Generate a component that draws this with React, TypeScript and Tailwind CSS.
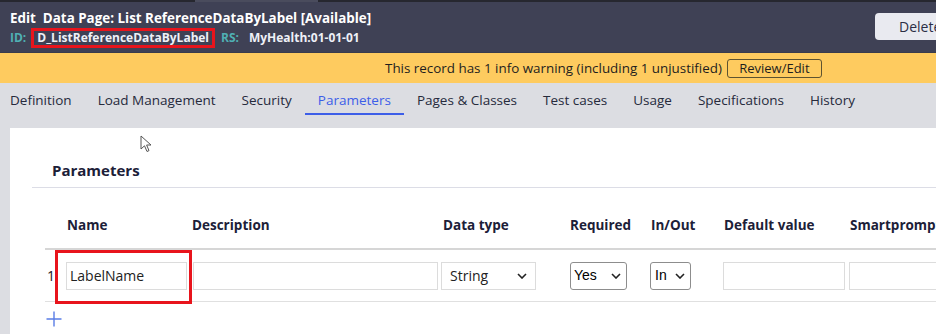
const tabs = [
  "Definition",
  "Load Management",
  "Security",
  "Parameters",
  "Pages & Classes",
  "Test cases",
  "Usage",
  "Specifications",
  "History",
];

function Chevron() {
  return (
    <svg width="10" height="6" viewBox="0 0 10 6" className="shrink-0">
      <path d="M1 1 L5 5 L9 1" fill="none" stroke="#222" strokeWidth="1.6" />
    </svg>
  );
}

export default function App() {
  return (
    <div className="relative w-[936px] h-[334px] overflow-hidden bg-[#dcdde2] font-['Open_Sans',sans-serif] flex flex-col">
      {/* top strip */}
      <div className="h-[2px] bg-[#26272f] flex shrink-0">
        <div className="w-[195px]" />
        <div className="w-[123px] bg-[#4a4c5d]" />
      </div>

      {/* header */}
      <div className="h-[50px] bg-[#3f4155] flex shrink-0">
        <div className="pl-[10px] pt-[6px]">
          <div className="text-[13.4px] leading-[20px] font-bold text-white whitespace-nowrap">
            Edit&nbsp; Data Page: List ReferenceDataByLabel [Available]
          </div>
          <div className="flex items-center text-[12px] leading-[14px] font-bold whitespace-nowrap">
            <span className="text-[#4fb0b4]">ID:</span>
            <span className="ml-[5px] border-[3px] border-[#e8141c] px-[3px] text-[#eef0f7]">D_ListReferenceDataByLabel</span>
            <span className="ml-[6px] text-[#4fb0b4]">RS:</span>
            <span className="ml-[10px] text-[#eef0f7]">MyHealth:01-01-01</span>
          </div>
        </div>
        <div className="ml-auto mt-[11px] mr-[-30px] w-[91px] h-[27px] rounded-[4px] bg-[#e9eaf0] text-[14px] text-[#2b2e45] pl-[24px] leading-[27px]">
          Delete
        </div>
      </div>

      {/* warning banner */}
      <div className="h-[31px] bg-[#fecb5f] flex items-center pl-[385px] shrink-0 border-t border-[#3a3c4c]">
        <span className="text-[13.4px] text-[#1e1e1e] whitespace-nowrap">
          This record has 1 info warning (including 1 unjustified)
        </span>
        <span className="ml-[5px] h-[19px] w-[95px] border border-[#5e5330] rounded-[3px] text-[13px] leading-[17px] text-[#1e1e1e] text-center">
          Review/Edit
        </span>
      </div>

      {/* tabs */}
      <div className="h-[45px] flex items-start ml-[-3px] shrink-0">
        {tabs.map((t) => (
          <div
            key={t}
            className={
              t === "Parameters"
                ? "h-[32px] px-[13px] pt-[7px] text-[13.5px] leading-[20px] whitespace-nowrap text-[#3d5ee8] border-b-2 border-[#3d5ee8]"
                : "h-[32px] px-[13px] pt-[7px] text-[13.5px] leading-[20px] whitespace-nowrap text-[#262a3c] border-b-2 border-transparent"
            }
          >
            {t}
          </div>
        ))}
      </div>

      {/* panel */}
      <div className="ml-[10px] flex-1 bg-white pl-[22px]">
        <div className="pl-[20px] pt-[32px] pb-[7px] text-[15px] leading-[20px] font-bold text-[#1c2038] border-b border-[#dcdde6]">
          Parameters
        </div>

        <div className="ml-[13px] mt-[18px]">
          {/* column headers */}
          <div className="flex h-[44px] items-center pb-[3px] text-[13.5px] font-bold text-[#1c2038] whitespace-nowrap border-b-2 border-[#d6d6d6]">
            <div className="w-[20px] shrink-0" />
            <div className="w-[125px] shrink-0 pl-[2px]">Name</div>
            <div className="w-[250px] shrink-0 pl-[2px]">Description</div>
            <div className="w-[127px] shrink-0 pl-[3px]">Data type</div>
            <div className="w-[81px] shrink-0 pl-[3px]">Required</div>
            <div className="w-[73px] shrink-0 pl-[3px]">In/Out</div>
            <div className="w-[126px] shrink-0 pl-[3px]">Default value</div>
            <div className="w-[120px] shrink-0 pl-[3px]">Smartprompt type</div>
          </div>

          {/* row */}
          <div className="flex h-[52px] items-center border-b border-[#e0e0e0] text-[14px] text-[#222]">
            <div className="w-[20px] shrink-0 pl-[2px]">1</div>
            <div className="relative w-[125px] shrink-0 pl-[1px]">
              <div className="w-[121px] h-[28px] border border-[#dcdcdc] pl-[3px] leading-[26px]">LabelName</div>
              <div className="absolute left-[-10px] top-[-12px] w-[137px] h-[54px] border-[3px] border-[#e8141c]" />
            </div>
            <div className="w-[250px] shrink-0 pl-[3px]">
              <div className="w-[245px] h-[28px] border border-[#dcdcdc]" />
            </div>
            <div className="w-[127px] shrink-0 pl-[1px]">
              <div className="w-[95px] h-[28px] border border-[#dcdcdc] flex items-center justify-between pl-[8px] pr-[8px]">
                <span>String</span>
                <Chevron />
              </div>
            </div>
            <div className="w-[81px] shrink-0 pl-[3px]">
              <div className="w-[57px] h-[28px] border border-[#8d8d8d] rounded-[3px] flex items-center justify-between pl-[3px] pr-[5px] font-['Liberation_Sans',sans-serif] text-[14px] text-black">
                <span>Yes</span>
                <Chevron />
              </div>
            </div>
            <div className="w-[73px] shrink-0 pl-[2px]">
              <div className="w-[41px] h-[28px] border border-[#8d8d8d] rounded-[3px] flex items-center justify-between pl-[4px] pr-[5px] font-['Liberation_Sans',sans-serif] text-[14px] text-black">
                <span>In</span>
                <Chevron />
              </div>
            </div>
            <div className="w-[126px] shrink-0 pl-[2px]">
              <div className="w-[122px] h-[28px] border border-[#dcdcdc]" />
            </div>
            <div className="w-[120px] shrink-0 pl-[2px]">
              <div className="w-[118px] h-[28px] border border-[#dcdcdc]" />
            </div>
          </div>

          <div className="pt-[9px] pl-[1px]">
            <svg width="16" height="16" viewBox="0 0 16 16">
              <path d="M8 0.5 V15.5 M0.5 8 H15.5" stroke="#5a7de6" strokeWidth="1.4" />
            </svg>
          </div>
        </div>
      </div>

      {/* mouse cursor */}
      <svg className="absolute left-[140px] top-[135px]" width="13" height="18" viewBox="0 0 13 18">
        <path d="M1 1 L1 14 L4.5 10.8 L7 16.5 L9 15.6 L6.6 10 L11 10 Z" fill="white" stroke="#555" strokeWidth="1" strokeLinejoin="round" />
      </svg>
    </div>
  );
}
